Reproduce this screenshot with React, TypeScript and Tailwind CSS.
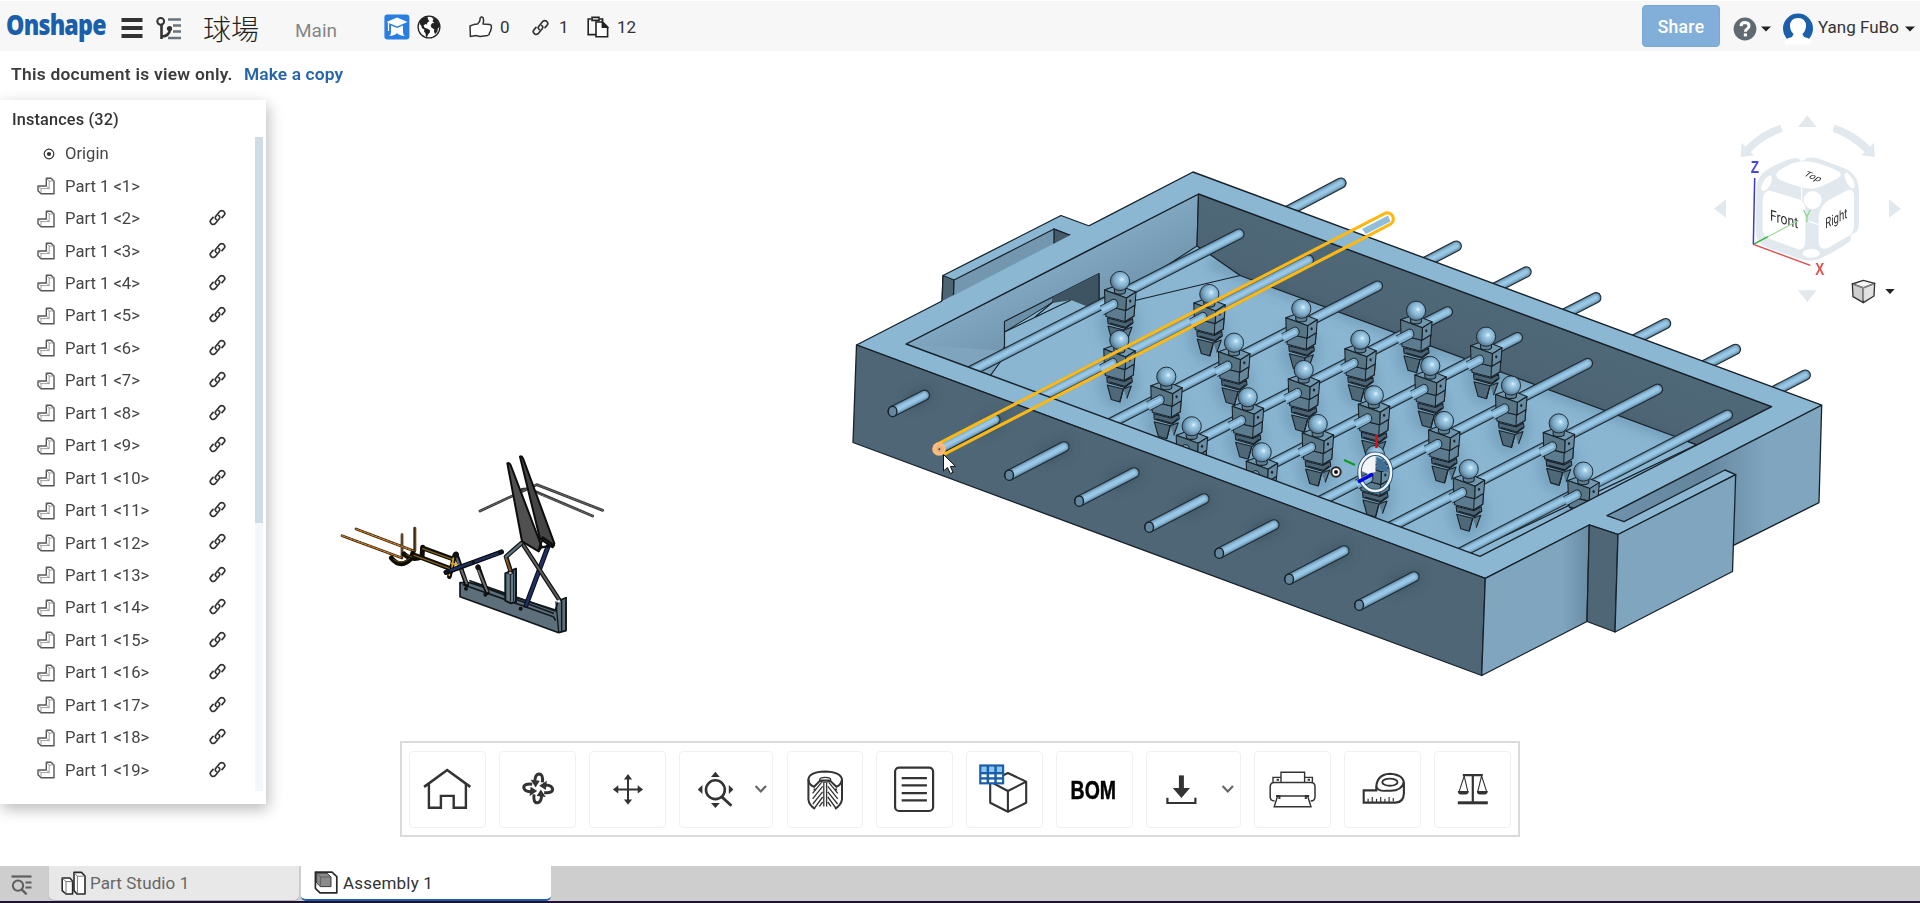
import React from "react";

const INK = "#333333";

/* ------------------------------------------------------------------ */
/* 3D scene                                                            */
/* ------------------------------------------------------------------ */

type Pt = [number, number];

const heads: Pt[] = [
  [1120, 281], [1209.3, 294], [1119.3, 340], [1301.3, 308.7], [1234, 342.7],
  [1166.3, 376.7], [1303.7, 370], [1247.7, 397.3], [1191.7, 426.3], [1317.7, 424],
  [1261.7, 452.3], [1416, 310.8], [1486, 336.7], [1360.3, 339.8], [1430.3, 366],
  [1511, 385.5], [1373.8, 395.3], [1444, 421], [1558.7, 423.4], [1468.7, 469.2],
  [1583.3, 471.6], [1375, 455],
];
const sortedHeads = [...heads].sort((a, b) => a[1] - b[1]);

function Rod({ a, b }: { a: Pt; b: Pt }) {
  const line = { x1: a[0], y1: a[1], x2: b[0], y2: b[1], strokeLinecap: "round" as const };
  return (
    <g>
      <line {...line} stroke="#1d2a33" strokeWidth={11.2} />
      <line {...line} stroke="#6b93ad" strokeWidth={9} />
      <line {...line} stroke="#86b4d2" strokeWidth={6.8} />
      <line {...line} stroke="#98c8e6" strokeWidth={3.6} />
    </g>
  );
}

function Player({ p }: { p: Pt }) {
  return (
    <g transform={`translate(${p[0]} ${p[1]})`} stroke="#17222a" strokeWidth={1.1} strokeLinejoin="round">
      <path d="M-12 45 L4 49 L0.5 62 L-8 59.5Z" fill="#4f6878" />
      <path d="M4 49 L12 46 L7.5 58.5 M4 49 L0.5 62" fill="#5d7a8d" />
      <path d="M-12.5 37 L5 41.5 L12.5 37.5 L13 42 L5.5 47.5 L-12 42.5Z" fill="#4b6373" />
      <path d="M-10 42 L6 46.5 L11.5 42" fill="none" />
      <path d="M-15 24 L5.5 29.5 L14.8 24 L14 35 L5 40.5 L-14 35.5Z" fill="#5d7b8e" />
      <path d="M5.5 29.5 L14.8 24 L14 35 L5 40.5Z" fill="#66879b" />
      <path d="M-15.5 9 L-2 4 L16 11 L6.5 17Z" fill="#7399b1" />
      <path d="M-15.5 9 L6.5 17 L6 29.5 L-15 24.5Z" fill="#587586" />
      <path d="M6.5 17 L16 11 L15 24 L6 29.5Z" fill="#6b8da3" />
      <ellipse cx={10.3} cy={20} rx={1.1} ry={1.5} fill="#17222a" stroke="none" />
      <path d="M-5.5 7 V10.5 A5.5 2.6 0 0 0 5.5 10.5 V7Z" fill="#5f7f93" />
      <circle r={9.6} fill="url(#ball)" strokeWidth={0.9} />
      <g stroke="none">
        <path d="M-20 25.5 L-7 18.6 A4.2 5 0 0 1 -3.5 26.8 L-16.5 33.6Z" fill="#7eabc8" />
        <path d="M-19 27.6 L-5.8 20.8 L-4.5 24.2 L-17.6 31Z" fill="#99c9e6" />
      </g>
      <path d="M-20 25.2 L-7 18.3 A4.2 5 0 0 1 -3.5 27 L-16.5 33.8" fill="none" strokeWidth={0.9} />
    </g>
  );
}

const innerPath = "M906 344 L1198.5 194 L1771.7 406.6 L1480 556.4Z";
const ks = [1, 2, 3, 4, 5, 6];

function Table() {
  const line = "#17222a";
  return (
    <g strokeLinejoin="round">
      {/* stubs that leave the rear wall */}
      <Rod a={[1285, 212.5]} b={[1341, 183]} />
      {ks.map((k) => (
        <Rod key={k} a={[1346 + 69.8 * k, 241.2 + 25.8 * k]} b={[1386.5 + 69.8 * k, 220.3 + 25.8 * k]} />
      ))}

      {/* left goal box */}
      <g stroke={line} strokeWidth={1.3}>
        <path d="M943 275.5 L1061 215.5 L1092 227 L942 304Z" fill="#8bb7d3" />
        <path d="M943 275.5 L954 280 L953.5 298 L942 303Z" fill="#4d6473" />
        <path d="M954 280 L1054 229 L1072 236 L953.5 296Z" fill="#7397af" />
        <path d="M1054 229 L1072 236 L1054 244Z" fill="#455b69" />
      </g>

      {/* interior */}
      <g clipPath="url(#inside)">
        <path d={innerPath} fill="#8ab6d2" />
        <g filter="url(#soft)">
          {sortedHeads.map((h, i) => (
            <ellipse key={i} cx={h[0] - 1} cy={h[1] + 42} rx={20} ry={27} fill="#5f88a3" opacity={0.42} />
          ))}
          <path d="M1210 262 L1690 442" stroke="#567d97" strokeWidth={10} opacity={0.5} />
          <path d="M920 368 L1475 568" stroke="#6a93ad" strokeWidth={14} opacity={0.35} />
        </g>
        <path d="M906 344 L1198.5 194 L1197 246 L1163 268 L1090 304 L1004 347 L1001 360 L990 376Z" fill="url(#leftwall)" stroke={line} strokeWidth={1.1} />
        <path d="M1004.5 321.5 L1099 273.5 V306 L1004.5 351Z" fill="#8ab6d2" stroke={line} strokeWidth={1.1} />
        <path d="M1004.5 321.5 L1053 297 L1053 302 L1004.5 332Z" fill="#6b8fa6" stroke={line} strokeWidth={1} />
        <path d="M1053 297 L1099 273.5 V305 L1086 306 L1071 300 L1053 303Z" fill="url(#dark)" />
        <path d="M1004.5 332 L1071 300 M1035 317 L1053 302 M1099 273.5 V300" stroke={line} strokeWidth={1.1} fill="none" />
        <path d="M1001 361 L990 376 L906 344 L1004 351Z" fill="#7fa4be" />
        <path d="M1001 361 L990 376 M1004.5 321.5 V347" stroke={line} strokeWidth={1.1} />
        <path d="M1198.5 194 L1771.7 406.6 L1697 445 L1675 436.5 L1240 275.5 L1210 254.5 L1197 246Z" fill="url(#dark)" stroke={line} strokeWidth={1.2} />
        <path d="M1133 301 L1240 275.5 M1473 551 L1697 444.5 M1675 437 L1697 445" stroke={line} strokeWidth={1.2} fill="none" />
        <Rod a={[893, 411]} b={[1239, 234]} />
        <Rod a={[939, 449]} b={[1308.5, 260]} />
        {ks.map((k) => (
          <Rod key={k} a={[939.5 + 70 * k, 449 + 26 * k]} b={[1307.5 + 70 * k, 260.2 + 25.8 * k]} />
        ))}
        {sortedHeads.map((h, i) => (
          <Player key={i} p={h} />
        ))}
      </g>

      {/* rim */}
      <path
        fillRule="evenodd"
        fill="#8bb7d3"
        d={"M856.5 345 L1193 172 L1821.7 405.2 L1607 515.7 L1624 521.6 L1725 470 L1735.7 474.7 L1618 534.5 L1589.3 525 L1485.3 578.4Z " + innerPath}
      />
      <path d="M1607 515.7 L1737 449 V475 L1725 470 L1624 521.6Z" fill="url(#slot)" />
      <path d="M1737 448 L1821.7 405.2 L1819 502.6 L1733 545.7Z" fill="url(#sideface)" />
      <path
        d={"M856.5 345 L942 301 M1088.5 226 L1193 172 L1821.7 405.2 L1607 515.7 L1624 521.6 L1725 470 L1735.7 474.7 L1618 534.5 L1589.3 525 L1485.3 578.4 L856.5 345 " + innerPath}
        fill="none" stroke={line} strokeWidth={1.4}
      />
      <path d="M1821.7 405.2 L1819 502.6 L1733 545.7" stroke={line} strokeWidth={1.3} fill="none" />

      {/* outer faces */}
      <g stroke={line} strokeWidth={1.3}>
        <path d="M856.5 345 L1485.3 578.4 L1481.7 675.5 L853 442.5Z" fill="#4e6676" />
        <path d="M1485.3 578.4 L1589.3 525 L1587 621.5 L1481.7 675.5Z" fill="url(#sideface2)" />
        <path d="M1589.3 525 L1618 534.5 L1615 632 L1587 621.5Z" fill="#4e6676" />
        <path d="M1618 534.5 L1735.7 474.7 L1732.5 571.5 L1615 632Z" fill="#7fa5bf" />
      </g>

      {/* front stubs */}
      <g filter="url(#soft)" stroke="#33444f" strokeWidth={14} opacity={0.45} strokeLinecap="round">
        <path d="M912 401 L926 395 M985 427 L997 421" />
        {ks.map((k) => (
          <path key={k} d={`M${975 + 70 * k} ${430 + 26 * k} l20 -9`} />
        ))}
      </g>
      <Rod a={[893, 411.3]} b={[924.5, 395.2]} />
      <Rod a={[939, 449]} b={[995, 419.5]} />
      {ks.map((k) => (
        <Rod key={k} a={[939.5 + 70 * k, 449 + 26 * k]} b={[994 + 70 * k, 420.8 + 26 * k]} />
      ))}
      <g fill="#64879d" stroke={line} strokeWidth={1.4}>
        <ellipse cx={892.6} cy={411.4} rx={4.3} ry={5.2} />
        {ks.map((k) => (
          <ellipse key={k} cx={939.2 + 70 * k} cy={449.2 + 26 * k} rx={4.3} ry={5.2} />
        ))}
      </g>

      {/* selected rod */}
      <path d="M1362 229 L1388 215.5 L1390.5 221.5 L1366 234Z" fill="#8fbedb" />
      <path
        d="M937 444.3 L1384 213.8 A5.9 5.9 0 0 1 1390.5 224.2 L943 454.8"
        fill="none" stroke="#fcb813" strokeWidth={3.1}
      />
      <circle cx={939} cy={449} r={6.8} fill="#f8bd7c" />
      <circle cx={940} cy={449} r={3.4} fill="#e6b183" />
      <circle cx={939.3} cy={449.3} r={1} fill="#5b3b20" />
    </g>
  );
}

function Manipulator() {
  return (
    <g fill="none">
      <path d="M1375.5 472 V453 A17 19.5 0 0 0 1359.5 470 L1368 474Z" fill="#f2f4f6" />
      <path d="M1376.5 457 Q1387 460 1388 472 L1376.5 470Z" fill="#3f6f94" />
      <ellipse cx={1375.3} cy={472.3} rx={15.8} ry={18.6} stroke="#24567d" strokeWidth={4.4} />
      <ellipse cx={1375.3} cy={472.3} rx={15.8} ry={18.6} stroke="#f4f4f4" strokeWidth={2.5} />
      <path d="M1376.5 435 V448" stroke="#e10b12" strokeWidth={2.6} />
      <path d="M1344 460 L1355 465" stroke="#0e9a1e" strokeWidth={2.2} />
      <path d="M1358 482 L1373 474" stroke="#0606e0" strokeWidth={3.6} />
      <circle cx={1336} cy={472} r={4.7} fill="#fff" stroke="#2b2b2b" strokeWidth={2} />
      <circle cx={1336} cy={472} r={2} fill="#111" />
    </g>
  );
}

/* Linkage on the left: drawn in a space three times as fine as the page. */
function Linkage() {
  return (
    <g transform="translate(320 430) scale(0.33333)" strokeLinecap="round" strokeLinejoin="round" fill="none">
      <g stroke="#3a3a3a" strokeWidth={8.5}>
        <path d="M480 243 L650 164 L848 241 M605 178 L625 176 L818 258" />
      </g>
      <g stroke="#8a8a8a" strokeWidth={2} strokeDasharray="5 4">
        <path d="M480 243 L650 164 L848 241 M625 178 L818 258" />
      </g>
      <path d="M600 80 Q606 76 611 90 L703 340 L698 352 L660 326 Z" fill="#454545" stroke="#0d0d0d" strokeWidth={6} />
      <path d="M420 458 L450 458 L706 540 L715 512 L738 503 L738 602 L716 608 L420 500Z" fill="#5d6f7a" stroke="#10171b" strokeWidth={5} />
      <path d="M430 464 L700 560 L706 570 M450 452 L706 543 M460 460 L700 550" stroke="#141b20" strokeWidth={5} />
      <path d="M708 516 L716 606 M725 512 V602 M738 503 V600" stroke="#10171b" strokeWidth={4} />
      <path d="M556 430 L588 416 V516 L572 520 L556 512Z" fill="#657a87" stroke="#10171b" strokeWidth={6} />
      <path d="M571 428 V514 M581 424 V512" stroke="#10171b" strokeWidth={3} />
      {[[408, 372, 440, 464], [474, 410, 502, 488]].map((l, i) => (
        <g key={i}>
          <line x1={l[0]} y1={l[1]} x2={l[2]} y2={l[3]} stroke="#0e0e0e" strokeWidth={14} />
          <line x1={l[0]} y1={l[1] + 8} x2={l[2]} y2={l[3] - 4} stroke="#6c6c6c" strokeWidth={6} />
        </g>
      ))}
      <path d="M684 350 L618 526" stroke="#0b1020" strokeWidth={15} />
      <path d="M684 350 L618 526" stroke="#1f3060" strokeWidth={8} />
      <path d="M608 342 L718 510" stroke="#111" strokeWidth={13} />
      <path d="M608 342 L718 510" stroke="#5f5f5f" strokeWidth={6} />
      <path d="M604 340 L558 380 L572 424" stroke="#0e1418" strokeWidth={14} />
      <path d="M604 340 L558 380" stroke="#62747f" strokeWidth={7} />
      <path d="M559 386 L571 422" stroke="#8b5a1c" strokeWidth={6} />
      <path d="M562 100 Q568 96 573 108 L665 350 L656 364 L606 334 Z" fill="#505050" stroke="#0d0d0d" strokeWidth={6} />
      <path d="M656 362 L668 322 L702 346 L664 352" stroke="#0d0d0d" strokeWidth={7} />
      <g stroke="#3a2812" strokeWidth={8}>
        <path d="M66 317 L246 384 V314 M108 297 L284 364 V294" />
      </g>
      <g stroke="#d8842a" strokeWidth={3.4} strokeDasharray="8 4">
        <path d="M66 317 L244 383 M108 297 L282 363" />
      </g>
      <path d="M246 314 V384 M288 294 V362" stroke="#8a6a48" strokeWidth={3} strokeDasharray="4 3" />
      <path d="M214 384 Q244 420 276 382 L278 370 M252 372 Q276 394 306 380 L308 352" stroke="#0f0c03" strokeWidth={15} />
      <path d="M220 388 Q244 408 270 384 M258 374 Q282 386 302 376" stroke="#5c4a14" strokeWidth={3} />
      <path d="M308 354 L402 388 M280 374 L386 414 M404 376 L388 440" stroke="#0f0c03" strokeWidth={14} />
      <path d="M308 356 L400 389 M282 376 L384 414" stroke="#80631a" strokeWidth={4} />
      <path d="M394 400 L412 404 M388 416 V436 M400 384 L396 414" stroke="#d9ac1c" strokeWidth={5} />
      <path d="M378 427 L544 366" stroke="#05070d" strokeWidth={15} />
      <path d="M384 424 L540 368" stroke="#202f58" strokeWidth={8} />
      <path d="M378 427 L384 424 M540 367 L545 365" stroke="#0e1222" strokeWidth={13} />
      <g fill="#111" stroke="none">
        <circle cx={438} cy={476} r={6} /><circle cx={496} cy={494} r={6} /><circle cx={602} cy={536} r={6} />
        <circle cx={408} cy={374} r={9} /><circle cx={474} cy={412} r={8} /><circle cx={460} cy={396} r={5} />
      </g>
      <ellipse cx={716} cy={514} rx={5} ry={4} fill="#e8eef2" />
      <ellipse cx={571} cy={429} rx={7} ry={4} fill="#dfe6ea" stroke="#111" strokeWidth={3} />
    </g>
  );
}

function ViewCube() {
  const c = "#e1e8ee";
  return (
    <g transform="translate(1600 0) scale(0.33333)">
      <g fill={c}>
        <path d="M622 346 L650 381 H594Z M622 906 L650 871 H594Z M342 626 L378 598 V653Z M903 626 L867 598 V653Z" />
        <path d="M541 374 L548 395 Q492 414 452 456 L462 466 L422 471 L425 428 L436 440 Q480 393 541 374Z" />
        <path d="M704 374 L698 395 Q752 414 794 456 L784 466 L824 471 L822 428 L811 440 Q766 393 704 374Z" />
        <path d="M500 510 Q560 474 592 474 Q604 480 602 484 Q612 484 622 474 Q640 470 662 478 L740 508 Q776 528 777 570 V670 Q776 700 754 709 L750 724 Q700 760 658 776 Q632 788 600 776 L500 742 Q466 726 468 694 L470 560 Q474 526 500 510Z" />
      </g>
      <g fill="#fff">
        <path d="M536 512 Q580 484 612 484 Q650 484 712 512 Q732 522 714 534 Q668 560 640 566 Q610 568 540 540 Q518 526 536 512Z" />
        <path d="M510 572 L596 598 Q616 606 616 630 V724 Q614 752 594 748 L508 716 Q490 708 488 690 V600 Q490 572 510 572Z" />
        <path d="M690 598 L744 570 Q762 566 762 590 V680 Q760 700 742 710 L684 744 Q660 752 656 730 V650 Q660 614 690 598Z" />
        <circle cx={638} cy={600} r={27} />
        <ellipse cx={634} cy={760} rx={26} ry={13} />
        <ellipse cx={500} cy={550} rx={11} ry={26} transform="rotate(30 500 550)" />
        <ellipse cx={749} cy={542} rx={10} ry={26} transform="rotate(-28 749 542)" />
      </g>
      <path d="M605 562 V606 M626 664 L656 674 M750 708 L776 694" stroke="#fff" strokeWidth={4} />
      <g fontFamily='Roboto, "Liberation Sans", sans-serif' fill="#2e2e2e">
        <text transform="matrix(0.96 0.27 0 1.2 510 661)" fontSize={38}>Front</text>
        <text transform="matrix(0.8 -0.4 0 1.2 676 686)" fontSize={36}>Right</text>
        <text transform="matrix(0.85 0.34 -0.6 0.55 608 526)" fontSize={34}>Top</text>
      </g>
      <path d="M460 733 L504 710" stroke="#35b035" strokeWidth={4} />
      <path d="M504 710 L596 661" stroke="#97dc97" strokeWidth={3.4} />
      <path d="M460 733 L464 534" stroke="#3a3ae6" strokeWidth={4.5} />
      <path d="M460 733 L631 796" stroke="#e04848" strokeWidth={4.5} />
      <g fontFamily='"Liberation Sans", sans-serif' fontWeight={700} fontSize={52}>
        <text x={452} y={518} fill="#4747e8" textLength={25} lengthAdjust="spacingAndGlyphs">Z</text>
        <text x={646} y={826} fill="#e35050" textLength={27} lengthAdjust="spacingAndGlyphs">X</text>
        <text x={608} y={666} fill="#86d486" fontWeight={400} textLength={25} lengthAdjust="spacingAndGlyphs">Y</text>
      </g>
      <g stroke={INK} strokeWidth={4} strokeLinejoin="round">
        <path d="M790 841 L824 850 L790 864 L757 852Z" fill="#f6f6f6" />
        <path d="M757 852 L790 864 V908 L759 890Z" fill="#cfcfcf" />
        <path d="M790 864 L824 850 L822 888 L790 908Z" fill="#e2e2e2" />
      </g>
      <path d="M760 853 L790 863 L821 852 M790 864 V902" stroke="#8b8b8b" strokeWidth={4.4} fill="none" />
      <path d="M856 867 H884 L870 882Z" fill="#222" />
    </g>
  );
}

function Scene() {
  return (
    <svg className="absolute inset-0" width="1920" height="815" viewBox="0 51 1920 815">
      <defs>
        <radialGradient id="ball" cx="0.6" cy="0.42" r="0.62">
          <stop offset="0" stopColor="#e6f5fd" />
          <stop offset="0.2" stopColor="#a3cfe9" />
          <stop offset="0.6" stopColor="#7eabc8" />
          <stop offset="1" stopColor="#4f6f84" />
        </radialGradient>
        <linearGradient id="dark" gradientUnits="userSpaceOnUse" x1="1440" y1="285" x2="1410" y2="365">
          <stop offset="0" stopColor="#4f6878" />
          <stop offset="0.6" stopColor="#4d6575" />
          <stop offset="1" stopColor="#3f5463" />
        </linearGradient>
        <linearGradient id="leftwall" gradientUnits="userSpaceOnUse" x1="1030" y1="280" x2="1055" y2="330">
          <stop offset="0" stopColor="#80a6c0" />
          <stop offset="1" stopColor="#7296ae" />
        </linearGradient>
        <linearGradient id="slot" x1="0" x2="1" y1="0" y2="0">
          <stop offset="0" stopColor="#6f93ab" />
          <stop offset="0.75" stopColor="#64859c" />
          <stop offset="1" stopColor="#7498b0" />
        </linearGradient>
        <linearGradient id="sideface" gradientUnits="userSpaceOnUse" x1="1735" x2="1765" y1="0" y2="0">
          <stop offset="0" stopColor="#7195ad" />
          <stop offset="1" stopColor="#7fa5bf" />
        </linearGradient>
        <linearGradient id="sideface2" gradientUnits="userSpaceOnUse" x1="1562" x2="1589" y1="0" y2="0">
          <stop offset="0" stopColor="#7fa5bf" />
          <stop offset="1" stopColor="#6a8da5" />
        </linearGradient>
        <filter id="soft" x="-20%" y="-20%" width="140%" height="140%">
          <feGaussianBlur stdDeviation="6" />
        </filter>
        <clipPath id="inside"><path d={innerPath} /></clipPath>
      </defs>
      <Linkage />
      <Table />
      <Manipulator />
      <ViewCube />
      <path d="M943.5 454.5 V471 L947.5 467.5 L950.3 473.5 L953 472.3 L950.4 466.5 L955.5 466.3Z" fill="#fff" stroke="#111" strokeWidth={1} />
    </svg>
  );
}

/* ------------------------------------------------------------------ */
/* Small icons                                                         */
/* ------------------------------------------------------------------ */

function LinkIcon({ size = 17, className = "" }: { size?: number; className?: string }) {
  return (
    <svg width={size} height={size} viewBox="0 0 17 17" fill="none" stroke={INK} strokeWidth={1.7} strokeLinecap="round" strokeLinejoin="round" className={className}>
      <path d="M7.4 10.6 Q5.4 9.2 6.8 7.2 L10.9 2.3 Q12.4 .9 14.4 2.1 Q16.6 3.8 15.4 5.8 L13 8.6" />
      <path d="M9.6 6.4 Q11.6 7.8 10.2 9.8 L6.1 14.7 Q4.6 16.1 2.6 14.9 Q.4 13.2 1.6 11.2 L4 8.4" />
    </svg>
  );
}

function PartIcon() {
  return (
    <svg width="18" height="18" viewBox="0 0 18 18" fill="none" stroke="#555" strokeLinejoin="round">
      <path d="M9.3 1.2 H14 L17 4 V16.8 H4 L1 13.8 V9 H9.3Z" strokeWidth={1.4} />
      <path d="M9.3 1.4 L12.2 4 H17 M12.2 4 V11.6 H4 L1.2 9.2 M4 11.6 V16.6 M12.2 11.6 L9.3 9" strokeWidth={0.8} stroke="#888" />
    </svg>
  );
}

function OriginIcon() {
  return (
    <svg width="12" height="12" viewBox="0 0 12 12">
      <circle cx={6} cy={6} r={4.8} fill="none" stroke={INK} strokeWidth={1.2} />
      <circle cx={6} cy={6} r={2.1} fill={INK} />
    </svg>
  );
}

function Caret({ className = "" }: { className?: string }) {
  return (
    <svg width="10" height="6" viewBox="0 0 10 6" className={className}>
      <path d="M0 0.4 H10 L5 5.6Z" fill="#222" />
    </svg>
  );
}

/* ------------------------------------------------------------------ */
/* Header                                                              */
/* ------------------------------------------------------------------ */

function Header() {
  return (
    <header className="mt-px flex h-[50px] items-center bg-[#f7f7f7] text-[17px] text-[#333]">
      <div className="ml-[6px] flex h-full w-[115px] items-center">
        <span className="origin-left scale-x-[0.8] pb-[4px] font-['Open_Sans',sans-serif] text-[29px] font-extrabold tracking-[-1px] text-[#1b5faa]">
          Onshape
        </span>
      </div>
      <svg width="22" height="22" viewBox="0 0 22 22" className="mt-[3px]" fill={INK}>
        <rect x="0.5" y="1" width="21" height="4" /><rect x="0.5" y="9" width="21" height="4" /><rect x="0.5" y="17" width="21" height="4" />
      </svg>
      <svg width="26" height="24" viewBox="156 16 26 24" className="ml-[13px] mt-[3px]" fill="none">
        <circle cx="160.7" cy="21.3" r="3.4" stroke={INK} strokeWidth="2" />
        <path d="M161.5 24.5 V39 M162 36.5 Q169 36 170 30" stroke={INK} strokeWidth="2.6" />
        <circle cx="169.5" cy="28.5" r="2.6" fill={INK} />
        <path d="M168 19.5 H181 M173 25.5 H181 M173 31.5 H181 M168 38 H181" stroke="#6b747c" strokeWidth="2.4" />
      </svg>
      <span className="ml-[21px] w-[58px] whitespace-nowrap pt-[4px] font-['Noto_Sans_CJK_TC',sans-serif] text-[28px] font-light leading-none text-[#222]">球場</span>
      <span className="ml-[34px] w-[44px] pt-[10px] text-[19px] text-[#868686]">Main</span>
      <svg width="26" height="26" viewBox="0 0 26 26" className="ml-[45px] mt-[1px]">
        <rect x="0.4" y="0.6" width="25" height="25" rx="3" fill="#2a7de1" />
        <path d="M13 3.6 L23.5 8 L13 12.6 L2.5 8Z M7 11.4 L13 14 L19 11.4 V18 Q19 21 21 22 Q15 21.5 13 19 Q11 21.5 5 22 Q7 21 7 18Z" fill="#fff" />
        <path d="M4.5 9 V17" stroke="#fff" strokeWidth="1.2" />
      </svg>
      <svg width="24" height="24" viewBox="0 0 24 24" className="ml-[7px] mt-[1px]">
        <circle cx="12" cy="12" r="10.9" fill="#fff" stroke="#222" strokeWidth="1.3" />
        <path d="M10.5 1.6 Q5 2.5 2.6 7 L3.2 9.6 L4.4 11 L5 13.2 L7.4 14.4 L7 16.6 L8.6 18.6 L8.8 21.4 L10 22.2 L11 19.6 L12.8 17.4 L13 15.2 L10.6 13.8 L7.6 12.8 L6.6 10.6 L8.4 9 L9.4 9.8 L10.6 7.4 L12.4 6 L11 4.4Z" fill="#222" />
        <path d="M14.6 1.8 L19.5 4.2 L22 8.4 L22.6 12 L20.8 13.4 L20.4 16.6 L18 19.2 L17 16.6 L17.2 14.2 L14.6 12.8 L13.6 10.4 L15 8.2 L17.4 8 L15.4 6.2 L16.4 4.4Z" fill="#222" />
      </svg>
      <svg width="24" height="22" viewBox="0 0 24 22" className="ml-[28px] mt-[1px]" fill="#fff" stroke={INK} strokeWidth="1.5" strokeLinejoin="round">
        <path d="M1 10 L4.6 8.6 L8.6 8 Q11.6 5.4 11 2.4 Q11.4 .8 13 1 Q15.4 2 14.2 6.8 L14 8 L20.6 8.4 Q23 9 22.2 10.8 Q22.8 12.6 21.6 13.6 Q22 15.6 20.6 16.4 Q20.8 18.6 18.6 19.4 L11 20.4 L7 19.6 L1.4 20.6Z" />
      </svg>
      <span className="ml-[7px] w-[12px] pt-[3px]">0</span>
      <LinkIcon size={17} className="ml-[20px] mt-[2px]" />
      <span className="ml-[10px] w-[12px] pt-[3px]">1</span>
      <svg width="22" height="22" viewBox="0 0 22 22" className="ml-[16px] mt-[1px]" fill="none" stroke="#222" strokeWidth="1.6">
        <path d="M4 3 H1.2 V18.6 H9 M12.6 3 H15.6 V5.4" />
        <path d="M5 1.4 H12 V4.4 H5Z" fill="#fff" />
        <path d="M9 6 H15.6 L20.6 11 V20.8 H9Z" fill="#fff" />
        <path d="M15.4 6.2 V11.2 H20.4Z" fill="#222" />
      </svg>
      <span className="ml-[8px] pt-[3px]">12</span>

      <div className="ml-auto flex h-full items-center pr-[5px]">
        <button className="flex h-[42px] w-[78px] items-center justify-center rounded-[4px] border border-[#79a8d4] bg-[#82afd9] pt-[2px] text-[17.5px] font-medium tracking-[0.3px] text-white">
          Share
        </button>
        <svg width="24" height="24" viewBox="0 0 24 24" className="ml-[13px] mt-[5px]">
          <circle cx="12" cy="12" r="11.4" fill="#5f6a72" />
          <path d="M8 9.2 Q8.2 5.6 12 5.6 Q16 5.8 16 9 Q16 10.8 14 12 Q12.4 13 12.4 14.8" fill="none" stroke="#fff" strokeWidth="3" />
          <rect x="10.8" y="16.4" width="3.2" height="3" fill="#fff" />
        </svg>
        <Caret className="ml-[4px] mt-[5px]" />
        <svg width="30" height="32" viewBox="0 0 30 32" className="ml-[12px] mt-[5px]">
          <circle cx="15" cy="15.6" r="15" fill="#1b5faa" />
          <path d="M15 5 Q22.8 5 23 13 Q22.6 18.6 19.4 21 L21 24 Q27 25.4 28.6 28 L28 31.6 H2 L1.4 28 Q3 25.4 9 24 L10.6 21 Q7.4 18.6 7 13 Q7.2 5 15 5Z" fill="#fff" />
        </svg>
        <span className="ml-[5px] w-[87px] whitespace-nowrap pt-[3px] text-[17px]">Yang FuBo</span>
        <Caret className="mt-[5px]" />
      </div>
    </header>
  );
}

/* ------------------------------------------------------------------ */
/* Instance list                                                       */
/* ------------------------------------------------------------------ */

function InstancePanel() {
  return (
    <aside className="relative flex h-[704px] w-[266px] flex-col bg-white shadow-[2px_5px_14px_rgba(0,0,0,0.28)]">
      <h2 className="h-[37px] pl-[12px] pt-[8px] text-[16.3px] font-medium leading-[24px] tracking-[0.15px] text-[#333]">Instances (32)</h2>
      <div className="flex h-[654px] pr-[3px]">
        <ul className="flex-1 pt-[0.5px] text-[16.6px] text-[#444]">
          <li className="flex h-[32.44px] items-center pl-[43px]">
            <OriginIcon />
            <span className="ml-[10px] pt-[2px]">Origin</span>
          </li>
          {Array.from({ length: 19 }, (_, i) => (
            <li key={i} className="flex h-[32.44px] items-center pl-[37px]">
              <PartIcon />
              <span className="ml-[10px] w-[143px] whitespace-nowrap pt-[2px]">Part 1 &lt;{i + 1}&gt;</span>
              {i > 0 && <LinkIcon size={17} className="ml-[1px] -mt-[2px]" />}
            </li>
          ))}
        </ul>
        <div className="w-[8px] bg-[#f3f7fb]">
          <div className="h-[386px] bg-[#cfdbe5]" />
        </div>
      </div>
    </aside>
  );
}

/* ------------------------------------------------------------------ */
/* Toolbar                                                             */
/* ------------------------------------------------------------------ */

function Tool({ x, wide, children }: { x: number; wide?: boolean; children: React.ReactNode }) {
  const w = wide ? 95 : 77;
  return (
    <button className="h-[77px] shrink-0 rounded-[4px] border border-[#f0f0f0] bg-white">
      <svg width={w - 2.2} height="75" viewBox={`${x + 1.3} 751.6 ${w - 2.2} 75`} fill="none" stroke={INK}>
        {children}
      </svg>
    </button>
  );
}

function Toolbar() {
  return (
    <div className="flex h-[96px] w-[1120px] items-center gap-[13.1px] border-[2.5px] border-[#dadada] bg-white pl-[7px]">
      <Tool x={409.2}>
        <path d="M424.6 786.5 L447.7 769.6 L470.8 786.5" strokeWidth={2.6} />
        <path d="M429.4 783 V807.4 H441.4 V795.5 H454.2 V807.4 H466.4 V783" strokeWidth={2.4} />
      </Tool>
      <Tool x={499.1}>
        {[0, 90, 180, 270].map((r) => (
          <g key={r} transform={`rotate(${r} 538.6 788)`}>
            <path d="M542.8 782 Q543.8 773.4 539.2 773.6 Q535.6 774.2 535.2 780.5" strokeWidth={3} />
            <path d="M531 779.4 L540.2 780.4 L536 787Z" fill={INK} stroke="none" />
          </g>
        ))}
      </Tool>
      <Tool x={589}>
        <path d="M628.3 776 V802 M616 789 H641" strokeWidth={2} />
        <path d="M628.3 773.6 L632.4 779 H624.2Z M628.3 804.4 L632.4 799 H624.2Z M613.2 789 L618.6 784.8 V793.2Z M643.4 789 L638 784.8 V793.2Z" fill={INK} stroke="none" />
      </Tool>
      <Tool x={678.9} wide>
        <circle cx={715.6} cy={789.3} r={9.4} strokeWidth={2.6} />
        <path d="M722 796.5 L731.6 805.4" strokeWidth={2.8} />
        <path d="M715.6 771.4 L720 776.6 H711.2Z M715.6 807.6 L720 802.6 H711.2Z M698 789 L702.6 784.6 V793.6Z M733.6 789 L729 784.6 V793.6Z" fill={INK} stroke="none" />
        <path d="M755.8 785.6 L761 791 L766.2 785.6" stroke="#666" strokeWidth={2.2} />
      </Tool>
      <Tool x={786.7}>
        <path d="M808.4 779 V799 Q809 805 815 808.4 M842 779 V799 Q841 805 835 808.4" strokeWidth={2} />
        <path d="M808.4 779 Q809 771.4 825 771 Q841 771.4 842 779 Q841 784.6 836.4 786.4 L829.8 780 H820.4 L814 786.4 Q809 784.6 808.4 779Z" strokeWidth={2} />
        <ellipse cx={825.2} cy={779.4} rx={5.6} ry={2.4} strokeWidth={1.2} />
        <path d="M814.6 788 V790 M836 788 V790" strokeWidth={2} />
        <path d="M821.6 782 L812.6 793 M822.6 786 L812.6 798.4 M822.6 791.4 L812.8 803.6 M822.6 796.6 L814.6 807.6 M822.6 801.6 L819.4 806 M823.8 782 V806 M828.8 782 L837.8 793 M827.8 786 L837.8 798.4 M827.8 791.4 L837.6 803.6 M827.8 796.6 L835.8 807.6 M827.8 801.6 L831 806 M826.6 782 V806" strokeWidth={1.3} />
      </Tool>
      <Tool x={876.6}>
        <rect x={896} y={767.2} width={38} height={43.4} rx={4} strokeWidth={2.2} />
        <path d="M902.6 777.7 H927.8 M902.6 785 H927.8 M902.6 792.7 H927.8 M902.6 800 H927.8" strokeWidth={2.1} />
      </Tool>
      <Tool x={966.5}>
        <path d="M1008.7 772.6 L1027 781.2 V802.4 L1008.7 811.4 L991 802.4 V781.2Z M991 781.2 L1008.7 790.6 L1027 781.2 M1008.7 790.6 V811" strokeWidth={2.1} strokeLinejoin="round" />
        <rect x={980} y={764} width={25} height={20} fill="#1b5faa" stroke="none" />
        <g stroke="none" fill="#8ec8f0">
          <rect x={982.2} y={766.2} width={5.2} height={5.4} /><rect x={989.9} y={766.2} width={5.2} height={5.4} /><rect x={997.6} y={766.2} width={5.2} height={5.4} />
        </g>
        <g stroke="none" fill="#fff">
          <rect x={982.2} y={774} width={5.2} height={2.8} /><rect x={989.9} y={774} width={5.2} height={2.8} /><rect x={997.6} y={774} width={5.2} height={2.8} />
          <rect x={982.2} y={779.2} width={5.2} height={2.6} /><rect x={989.9} y={779.2} width={5.2} height={2.6} /><rect x={997.6} y={779.2} width={5.2} height={2.6} />
        </g>
      </Tool>
      <Tool x={1056.4}>
        <text x={1071.3} y={798.8} fontSize={26} fontWeight={700} fontFamily='"Liberation Sans", Arial, sans-serif' fill="#000" stroke="#000" strokeWidth={0.5} textLength={45.5} lengthAdjust="spacingAndGlyphs">BOM</text>
      </Tool>
      <Tool x={1146.3} wide>
        <path d="M1182 775 V790" strokeWidth={5} />
        <path d="M1173.4 787.6 H1190.6 L1182 797.6Z" fill={INK} stroke="none" />
        <path d="M1168 797.4 V802.6 H1196 V797.4" strokeWidth={2.2} />
        <path d="M1223.2 785.6 L1228.4 791 L1233.6 785.6" stroke="#666" strokeWidth={2.2} />
      </Tool>
      <Tool x={1254.1}>
        <path d="M1275 800.6 Q1270.6 800.6 1270.6 796 V786.4 Q1270.6 782.2 1275 782.2 H1311 Q1315.4 782.2 1315.4 786.4 V796 Q1315.4 800.6 1311 800.6" strokeWidth={1.5} />
        <path d="M1281.4 782 V771.8 H1305 V782 M1273.4 782 V777 H1281.4 M1305 777 H1312.8 V782" strokeWidth={1.4} />
        <path d="M1278 795.6 H1308 L1311.4 806.4 H1274.6Z" fill="#fff" strokeWidth={1.4} />
        <path d="M1276.4 795.6 h3.4 v3 M1309.6 795.6 h-3.4 v3 M1277 779.4 h2.4 M1308 779.4 h2.4" strokeWidth={2} />
      </Tool>
      <Tool x={1344}>
        <path d="M1364 790 H1376.6 Q1375.6 774 1390.4 773.4 Q1404 774.4 1404.2 783 V793 Q1403.8 802 1396 802.2 H1364Z" strokeWidth={2.1} />
        <path d="M1376.6 786 Q1378 791 1386 790.4 L1391 790.4 Q1402 790 1404 782" strokeWidth={1.9} />
        <ellipse cx={1390.2} cy={781.8} rx={7.6} ry={3.6} strokeWidth={1.9} />
        <path d="M1368.4 802 V798.4 M1372.6 802 V796.6 M1376.8 802 V798.4 M1381 802 V796.6 M1385.2 802 V798.4 M1389.4 802 V796.6 M1393.6 801 V797.6" strokeWidth={1.2} />
      </Tool>
      <Tool x={1433.9}>
        <path d="M1463 774.8 H1483 M1473 774.8 V802" strokeWidth={2.2} />
        <path d="M1458 802.4 H1488" strokeWidth={3} />
        <path d="M1464.4 775.6 L1459.4 791 M1464.4 775.6 L1468 791 M1481.8 775.6 L1478 791 M1481.8 775.6 L1486.8 791" strokeWidth={1.1} />
        <path d="M1458 790.6 H1469 Q1469 794 1465.6 794 H1461 Q1458 794 1458 790.6Z M1477 790.6 H1488 Q1488 794 1484.6 794 H1480 Q1477 794 1477 790.6Z" fill={INK} stroke="none" />
      </Tool>
    </div>
  );
}

/* ------------------------------------------------------------------ */
/* Tab bar                                                             */
/* ------------------------------------------------------------------ */

function TabBar() {
  return (
    <footer className="flex h-[37px] items-start border-b-2 border-[#221232] bg-[#cecece] text-[17px]">
      <div className="flex h-[35px] w-[49px] items-center pl-[11px] pt-[3px]">
        <svg width="22" height="20" viewBox="0 0 22 20" fill="none" stroke="#5e5e5e">
          <path d="M0.5 1.5 H20.5" strokeWidth={2.2} />
          <circle cx={7} cy={10.6} r={5.2} strokeWidth={2} />
          <path d="M10.6 14.4 L15.6 19.4" strokeWidth={2.2} />
          <path d="M14.5 7.4 H20.5 M14.5 12.4 H20.5" strokeWidth={2} />
        </svg>
      </div>
      <div className="flex h-[34px] w-[250px] items-center rounded-b-[5px] bg-[#e8e8e8] pl-[12px] text-[#666] shadow-[0_1px_1px_rgba(0,0,0,0.15)]">
        <svg width="25" height="24" viewBox="61 870 25 24" fill="#fff" stroke="#2a2a2a" strokeLinejoin="round">
          <path d="M62.2 877 H69.8 L72.6 880 V893 H66 L62.2 889.6Z" strokeWidth={1.6} />
          <path d="M62.6 877.4 L66 880.6 H72.6 M66 880.6 V892.6" strokeWidth={1} fill="none" stroke="#777" />
          <path d="M74 871.4 H81.4 L85 875 V893 H77 L74 889.6Z" strokeWidth={1.6} />
          <path d="M74.4 872 L77.4 875.2 H84.6 M77.4 875.2 V892.6" strokeWidth={1} fill="none" stroke="#777" />
        </svg>
        <span className="ml-[4px] pt-[2px] tracking-[0.1px]">Part Studio 1</span>
      </div>
      <div className="ml-[2px] flex h-[35px] w-[250px] items-center rounded-b-[5px] border-b-2 border-[#1b5faa] bg-white pl-[13px] text-[#333]">
        <svg width="24" height="23" viewBox="314 871 24 23" stroke="#2a2a2a" strokeLinejoin="round">
          <path d="M315.4 872.2 H332 L336.8 876.6 V892.8 H320 L315.4 888.4Z" fill="#fff" strokeWidth={1.7} />
          <path d="M316.6 873.2 H327 L331 877 V886.6 H320.4 L316.6 883Z" fill="#8b8b8b" strokeWidth={0.9} />
          <path d="M316.6 873.2 L320.4 877 H331 M320.4 877 V886.6" fill="none" strokeWidth={0.8} stroke="#555" />
        </svg>
        <span className="ml-[5px] pt-[3px] tracking-[0.2px]">Assembly 1</span>
      </div>
    </footer>
  );
}

export default function App() {
  return (
    <div className="flex h-[903px] w-[1920px] flex-col overflow-hidden bg-white font-['Roboto','Noto_Sans_CJK_TC',sans-serif]">
      <Header />
      <main className="relative flex h-[815px] flex-col">
        <Scene />
        <div className="relative flex h-[49px] items-center pb-[3px] pl-[11px] text-[17.4px] font-semibold text-[#3c3c3c]">
          <span className="w-[233px] whitespace-nowrap tracking-[0.25px]">This document is view only.</span>
          <a className="whitespace-nowrap tracking-[0.1px] text-[#2665ab]">Make a copy</a>
        </div>
        <div className="relative flex flex-1 items-start">
          <InstancePanel />
          <div className="ml-[134px] mt-[641px]">
            <Toolbar />
          </div>
        </div>
      </main>
      <TabBar />
    </div>
  );
}
